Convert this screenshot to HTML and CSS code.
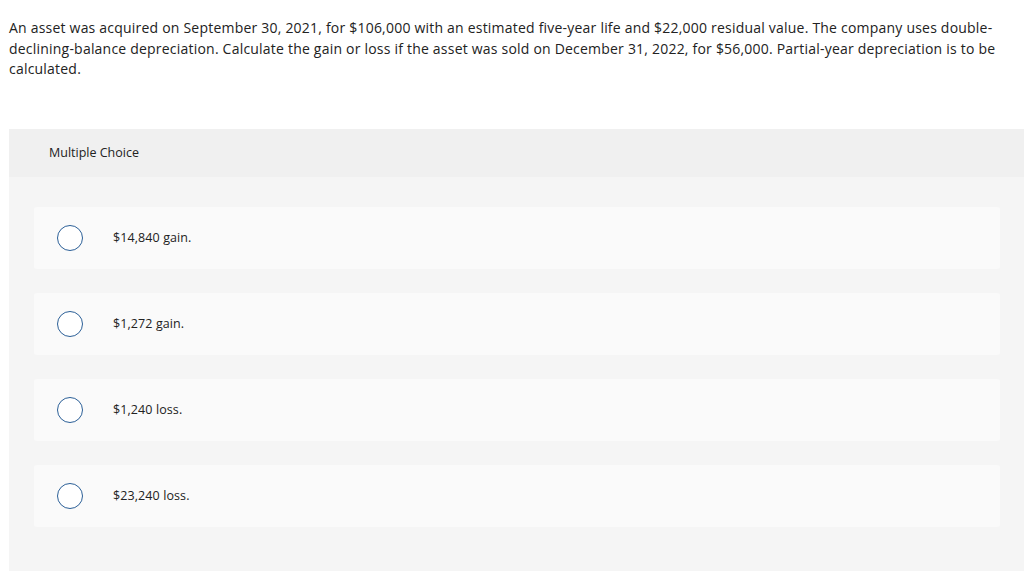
FILE: index.html
```html
<!DOCTYPE html>
<html>
<head>
<meta charset="utf-8">
<link rel="stylesheet" href="styles.css">
</head>
<body>
<p class="question">An asset was acquired on September 30, 2021, for $106,000 with an estimated five-year life and $22,000 residual value. The company uses double-declining-balance depreciation. Calculate the gain or loss if the asset was sold on December 31, 2022, for $56,000. Partial-year depreciation is to be calculated.</p>
<section class="panel">
  <div class="panel-head">Multiple Choice</div>
  <div class="panel-body">
    <div class="option"><span class="radio"></span><span class="label">$14,840 gain.</span></div>
    <div class="option"><span class="radio"></span><span class="label">$1,272 gain.</span></div>
    <div class="option"><span class="radio"></span><span class="label">$1,240 loss.</span></div>
    <div class="option"><span class="radio"></span><span class="label">$23,240 loss.</span></div>
  </div>
</section>
</body>
</html>
```
FILE: styles.css
```css
html, body {
  margin: 0;
  padding: 0;
  background: #fff;
}
body {
  font-family: "Open Sans", "Liberation Sans", sans-serif;
  color: #222;
  overflow: hidden;
}
.question {
  margin: 18px 20px 0 9px;
  font-size: 14px;
  line-height: 20.5px;
  letter-spacing: 0.21px;
}
.panel {
  margin: 49px 0 0 9px;
  background: #f5f5f5;
}
.panel-head {
  height: 48px;
  background: #f0f0f0;
  display: flex;
  align-items: center;
  padding-left: 40px;
  font-size: 12.5px;
}
.panel-body {
  display: flex;
  flex-direction: column;
  gap: 24px;
  padding: 30px 24px 44px 25px;
}
.option {
  height: 62px;
  background: #fafafa;
  border-radius: 3px;
  display: flex;
  align-items: center;
  padding-left: 23px;
}
.radio {
  width: 24px;
  height: 24px;
  border: 1px solid #2b5f97;
  border-radius: 50%;
  background: #fff;
  flex: none;
}
.label {
  margin-left: 30px;
  font-size: 12.5px;
  letter-spacing: 0.1px;
}
```
